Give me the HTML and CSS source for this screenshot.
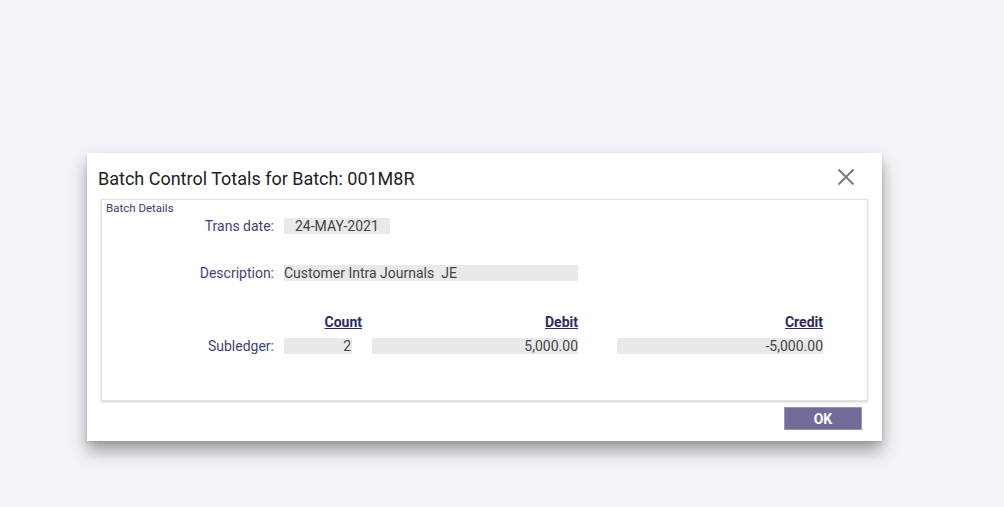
FILE: index.html
```html
<!DOCTYPE html>
<html>
<head>
<meta charset="utf-8">
<link rel="stylesheet" href="styles.css">
</head>
<body>
<div class="dialog">
  <div class="header">
    <div class="title">Batch Control Totals for Batch: 001M8R</div>
    <svg class="close" width="18" height="18" viewBox="0 0 18 18"><path d="M1.5 1.5L16.5 16.5M16.5 1.5L1.5 16.5" stroke="#777" stroke-width="1.8" fill="none"/></svg>
  </div>
  <div class="panel">
    <div class="legend">Batch Details</div>
    <div class="row r1">
      <div class="label">Trans date:</div>
      <div class="box date">24-MAY-2021</div>
    </div>
    <div class="row r2">
      <div class="label">Description:</div>
      <div class="box desc">Customer Intra Journals&nbsp; JE</div>
    </div>
    <div class="grid">
      <div></div>
      <div class="hd hcount">Count</div>
      <div class="hd">Debit</div>
      <div></div>
      <div class="hd">Credit</div>
      <div class="label">Subledger:</div>
      <div class="box num count">2</div>
      <div class="box num">5,000.00</div>
      <div></div>
      <div class="box num">-5,000.00</div>
    </div>
  </div>
  <div class="footer">
    <button class="ok">OK</button>
  </div>
</div>
</body>
</html>
```
FILE: styles.css
```css
html, body {
  margin: 0;
  padding: 0;
}
body {
  background: #f3f3f8;
  font-family: Roboto, "Liberation Sans", sans-serif;
  width: 1004px;
  height: 507px;
  overflow: hidden;
  padding-top: 153px;
  box-sizing: border-box;
}
.dialog {
  margin-left: 87px;
  width: 795px;
  height: 288px;
  background: #fff;
  box-shadow: 0 10px 16px rgba(0,0,0,0.35), 0 2px 4px rgba(0,0,0,0.1);
  display: flex;
  flex-direction: column;
}
.header {
  height: 46px;
  display: flex;
  align-items: center;
  justify-content: space-between;
  padding: 0 27px 0 11px;
}
.title {
  font-size: 18px;
  color: #222;
  margin-top: 4px;
}
.close {
  display: block;
  margin-top: 2px;
}
.panel {
  margin: 0 14px;
  height: 202px;
  box-sizing: border-box;
  border: 1px solid #e2e2e2;
  box-shadow: 0 1px 2px rgba(0,0,0,0.2);
  padding: 2px 0 0 2px;
}
.legend {
  font-size: 11.5px;
  line-height: 12px;
  color: #3d3a6e;
  padding-left: 2px;
}
.row {
  display: flex;
  align-items: center;
}
.r1 { margin-top: 4px; }
.r2 { margin-top: 31px; }
.label {
  width: 170px;
  text-align: right;
  font-size: 14px;
  color: #45427a;
  margin-right: 10px;
}
.box {
  background: #e9e9e9;
  height: 16px;
  line-height: 16px;
  font-size: 14px;
  color: #444;
  box-sizing: border-box;
}
.date {
  width: 106px;
  padding-left: 11px;
}
.desc {
  width: 294px;
}
.grid {
  display: grid;
  grid-template-columns: 180px 88px 206px 39px 206px;
  align-items: center;
  margin-top: 33px;
}
.grid .label {
  margin-right: 0;
  width: 170px;
}
.hd {
  font-size: 14px;
  font-weight: bold;
  color: #2e2b60;
  text-decoration: underline;
  text-align: right;
  line-height: 16px;
  margin-bottom: 8px;
}
.num {
  text-align: right;
}
.count {
  width: 68px;
  padding-right: 1px;
}
.hcount {
  padding-right: 10px;
}
.footer {
  display: flex;
  justify-content: flex-end;
  padding: 6px 20px 0 0;
}
.ok {
  width: 78px;
  height: 23px;
  background: #736c98;
  border: 1px solid #9994b4;
  color: #fff;
  font-family: Roboto, "Liberation Sans", sans-serif;
  font-weight: bold;
  font-size: 14px;
  padding: 0;
  margin: 0;
}
```
